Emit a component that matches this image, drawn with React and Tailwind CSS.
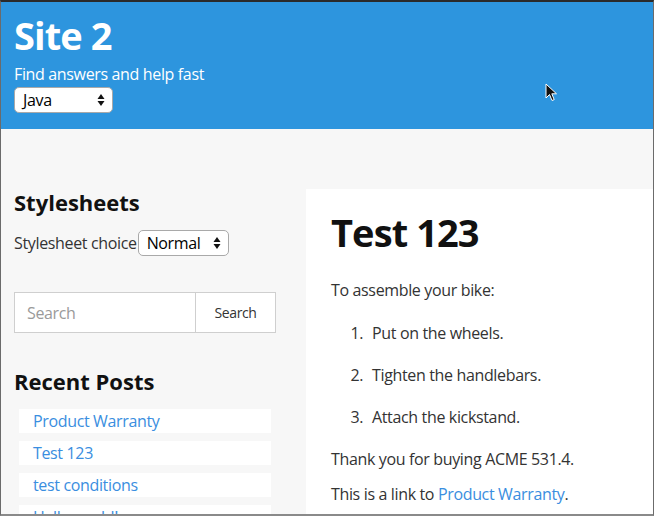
import React from "react";

const posts = ["Product Warranty", "Test 123", "test conditions", "Hello world!"];

const SelectArrows = () => (
  <svg width="8" height="14" viewBox="0 0 8 14" className="shrink-0">
    <path d="M4 1 L7.5 6 H0.5 Z" fill="#111" />
    <path d="M4 13 L7.5 8 H0.5 Z" fill="#111" />
  </svg>
);

const FakeSelect = ({ value, className }) => (
  <div
    className={`flex items-center justify-between bg-white border border-[#a9a9a9] rounded-[5px] pl-[8px] pr-[7px] h-[26px] text-[16px] text-black ${className}`}
  >
    <span>{value}</span>
    <SelectArrows />
  </div>
);

const Cursor = () => (
  <svg
    width="14"
    height="20"
    viewBox="0 0 14 20"
    className="absolute left-[544px] top-[81px]"
  >
    <path
      d="M1 1 L1 15 L4.5 11.5 L7 17.5 L9.2 16.6 L6.8 10.8 L11.5 10.8 Z"
      fill="#111"
      stroke="#fff"
      strokeWidth="1"
      strokeLinejoin="round"
    />
  </svg>
);

export default function App() {
  return (
    <div
      className="relative w-[654px] h-[516px] overflow-hidden bg-[#f7f7f7] border-t-2 border-t-[#2a2a2a] border-x border-x-[#6b6b6b] border-b-2 border-b-[#8a8a8a] tracking-[-0.35px]"
      style={{ fontFamily: '"Open Sans", "Noto Sans", sans-serif' }}
    >
      {/* header */}
      <header className="bg-[#2d95de] h-[127px] pl-[13px] pt-[11px]">
        <h1 className="text-[38px] leading-[44px] font-bold text-white tracking-[-0.9px]">Site 2</h1>
        <p className="mt-[5px] text-[16px] leading-[24px] text-white">
          Find answers and help fast
        </p>
        <FakeSelect value="Java" className="mt-px w-[99px]" />
      </header>

      <div className="flex pl-[13px] pt-[60px]">
        {/* sidebar */}
        <aside className="w-[262px] shrink-0">
          <h2 className="text-[22px] leading-[26px] font-bold text-[#111] tracking-normal">Stylesheets</h2>
          <div className="mt-[15px] flex items-center text-[16px] leading-[24px] text-[#333]">
            <span>Stylesheet choice</span>
            <FakeSelect value="Normal" className="ml-px w-[91px]" />
          </div>

          <div className="mt-[36px] flex h-[41px]">
            <div className="flex-1 flex items-center bg-white border border-[#cfcfcf] pl-[12px] text-[16px] text-[#9a9a9a]">
              Search
            </div>
            <button className="w-[80px] bg-white border border-l-0 border-[#cfcfcf] text-[14px] text-[#333]">
              Search
            </button>
          </div>

          <h2 className="mt-[35px] text-[22px] leading-[26px] font-bold text-[#111] tracking-normal">
            Recent Posts
          </h2>
          <ul className="mt-[15px] ml-[5px] w-[252px] flex flex-col gap-[8px]">
            {posts.map((p) => (
              <li key={p} className="bg-white h-[24px] pl-[14px] text-[16px] leading-[24px] text-[#3a8ee0]">
                <a href="#">{p}</a>
              </li>
            ))}
          </ul>
        </aside>

        {/* main */}
        <main className="ml-[30px] flex-1 bg-white pl-[25px] pt-[21px] h-[400px] text-[16px] leading-[24px] text-[#333]">
          <h1 className="text-[38px] leading-[44px] font-bold text-[#111] tracking-[-0.9px]">Test 123</h1>
          <p className="mt-[24px]">To assemble your bike:</p>
          <ol className="mt-[19px] list-decimal pl-[36px]">
            <li className="mb-[18px] pl-[5px]">Put on the wheels.</li>
            <li className="mb-[18px] pl-[5px]">Tighten the handlebars.</li>
            <li className="pl-[5px]">Attach the kickstand.</li>
          </ol>
          <p className="mt-[18px]">Thank you for buying ACME 531.4.</p>
          <p className="mt-[11px]">
            This is a link to <a href="#" className="text-[#3a8ee0]">Product Warranty</a>.
          </p>
        </main>
      </div>

      <Cursor />
    </div>
  );
}
